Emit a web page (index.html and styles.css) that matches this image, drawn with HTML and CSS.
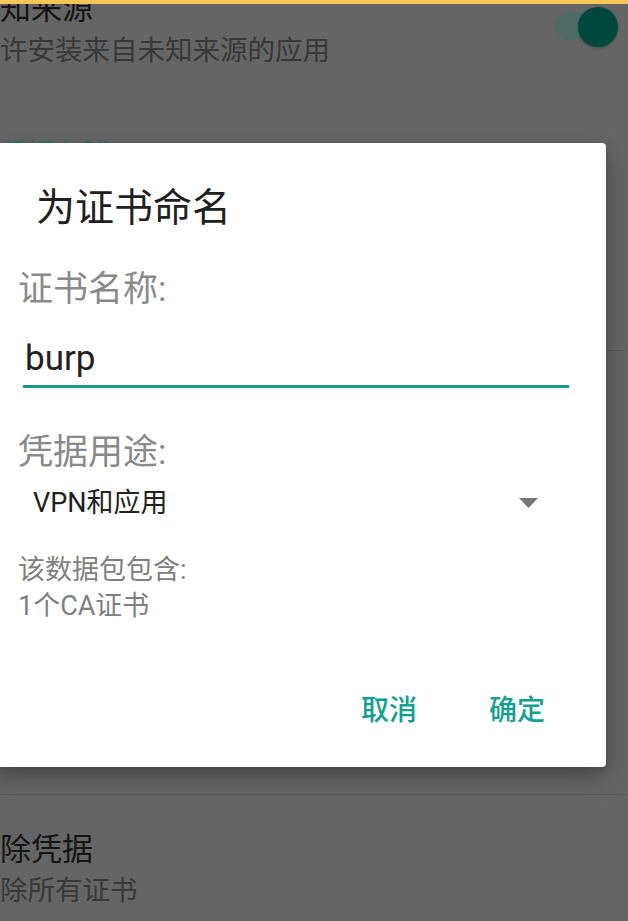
FILE: index.html
```html
<!DOCTYPE html>
<html lang="zh-CN">
<head>
<meta charset="utf-8">
<title>为证书命名</title>
<link rel="stylesheet" href="styles.css">
</head>
<body>
<div class="statusbar"></div>
<div class="page">
  <div class="row row-first">
    <div class="row-text">
      <div class="row-title">知来源</div>
      <div class="row-sub">许安装来自未知来源的应用</div>
    </div>
    <div class="switch"><span class="switch-track"></span><span class="switch-thumb"></span></div>
  </div>
  <div class="section-title">凭据存储</div>
  <div class="row row-a"></div>
  <div class="row row-b"></div>
  <div class="row row-last">
    <div class="row-title">除凭据</div>
    <div class="row-sub row-sub-last">除所有证书</div>
  </div>
</div>

<div class="dialog">
  <div class="dialog-title">为证书命名</div>
  <div class="field-label label-name">证书名称:</div>
  <div class="field-input">burp</div>
  <div class="field-label label-usage">凭据用途:</div>
  <div class="select">
    <span class="select-value">VPN和应用</span>
    <svg class="select-arrow" width="19" height="10" viewBox="0 0 19 10"><path d="M0 0 L19 0 L9.5 10 Z" fill="#777"/></svg>
  </div>
  <div class="info">
    <div>该数据包包含:</div>
    <div>1个CA证书</div>
  </div>
  <div class="actions">
    <span class="btn">取消</span>
    <span class="btn">确定</span>
  </div>
</div>
</body>
</html>
```
FILE: styles.css
```css
* { box-sizing: border-box; }
html, body {
  margin: 0;
  padding: 0;
}
body {
  width: 628px;
  height: 921px;
  overflow: hidden;
  position: relative;
  background: #656565;
  font-family: Roboto, "Noto Sans CJK SC", sans-serif;
}
.statusbar {
  position: absolute;
  top: 0;
  left: 0;
  right: 0;
  height: 4px;
  background: #f7c65b;
  z-index: 2;
}
.page {
  margin-top: -6px;
}
.row-first {
  display: flex;
  justify-content: space-between;
  align-items: flex-start;
}
.row-title {
  font-size: 31px;
  line-height: 30px;
  color: #151515;
}
.row-sub {
  margin-top: 8px;
  font-size: 27.5px;
  line-height: 37px;
  color: #383838;
}
.switch {
  position: relative;
  width: 63px;
  height: 40px;
  margin-top: 13px;
  margin-right: 10px;
}
.switch-track {
  position: absolute;
  left: 0;
  top: 5px;
  width: 58px;
  height: 28px;
  border-radius: 14px;
  background: #4f6b65;
}
.switch-thumb {
  position: absolute;
  right: 0;
  top: 0;
  width: 40px;
  height: 40px;
  border-radius: 50%;
  background: #00483d;
  box-shadow: 0 1px 3px rgba(0,0,0,0.25);
}
.section-title {
  margin-top: 67px;
  font-size: 27px;
  line-height: 36px;
  color: #2e7066;
}
.row-a {
  height: 179px;
  border-bottom: 1px solid #5b5b5b;
}
.row-b {
  height: 444px;
  border-bottom: 1px solid #5a5a5a;
}
.row-last {
  padding-top: 35px;
}
.row-last .row-title {
  line-height: 40px;
}
.row-sub-last {
  margin-top: 3px;
  line-height: 36px;
}

.dialog {
  position: absolute;
  top: 143px;
  left: -10px;
  width: 616px;
  padding: 40px 37px 36px 28px;
  background: #ffffff;
  border-radius: 4px;
  box-shadow: 0 12px 28px rgba(0,0,0,0.22), 0 4px 10px rgba(0,0,0,0.15);
  z-index: 1;
}
.dialog-title {
  padding-left: 18px;
  font-size: 39px;
  line-height: 50px;
  color: #212121;
}
.field-label {
  font-size: 35px;
  line-height: 44px;
  color: #8a8a8a;
}
.label-name { margin-top: 35px; }
.label-usage { margin-top: 43px; }
.field-input {
  margin-top: 25px;
  margin-left: 5px;
  padding-left: 2px;
  padding-bottom: 4px;
  font-size: 35px;
  line-height: 44px;
  color: #212121;
  border-bottom: 3px solid #14998a;
}
.select {
  margin-top: 8px;
  padding-left: 15px;
  padding-right: 31px;
  display: flex;
  justify-content: space-between;
  align-items: center;
  height: 40px;
}
.select-value {
  font-size: 27px;
  line-height: 40px;
  color: #222222;
}
.select-arrow {
  display: block;
}
.info {
  margin-top: 29px;
  font-size: 27px;
  line-height: 36px;
  color: #808080;
}
.actions {
  margin-top: 67px;
  padding-right: 24px;
  display: flex;
  justify-content: flex-end;
  gap: 72px;
}
.btn {
  font-size: 28px;
  line-height: 40px;
  font-weight: 500;
  color: #14a090;
}
```
